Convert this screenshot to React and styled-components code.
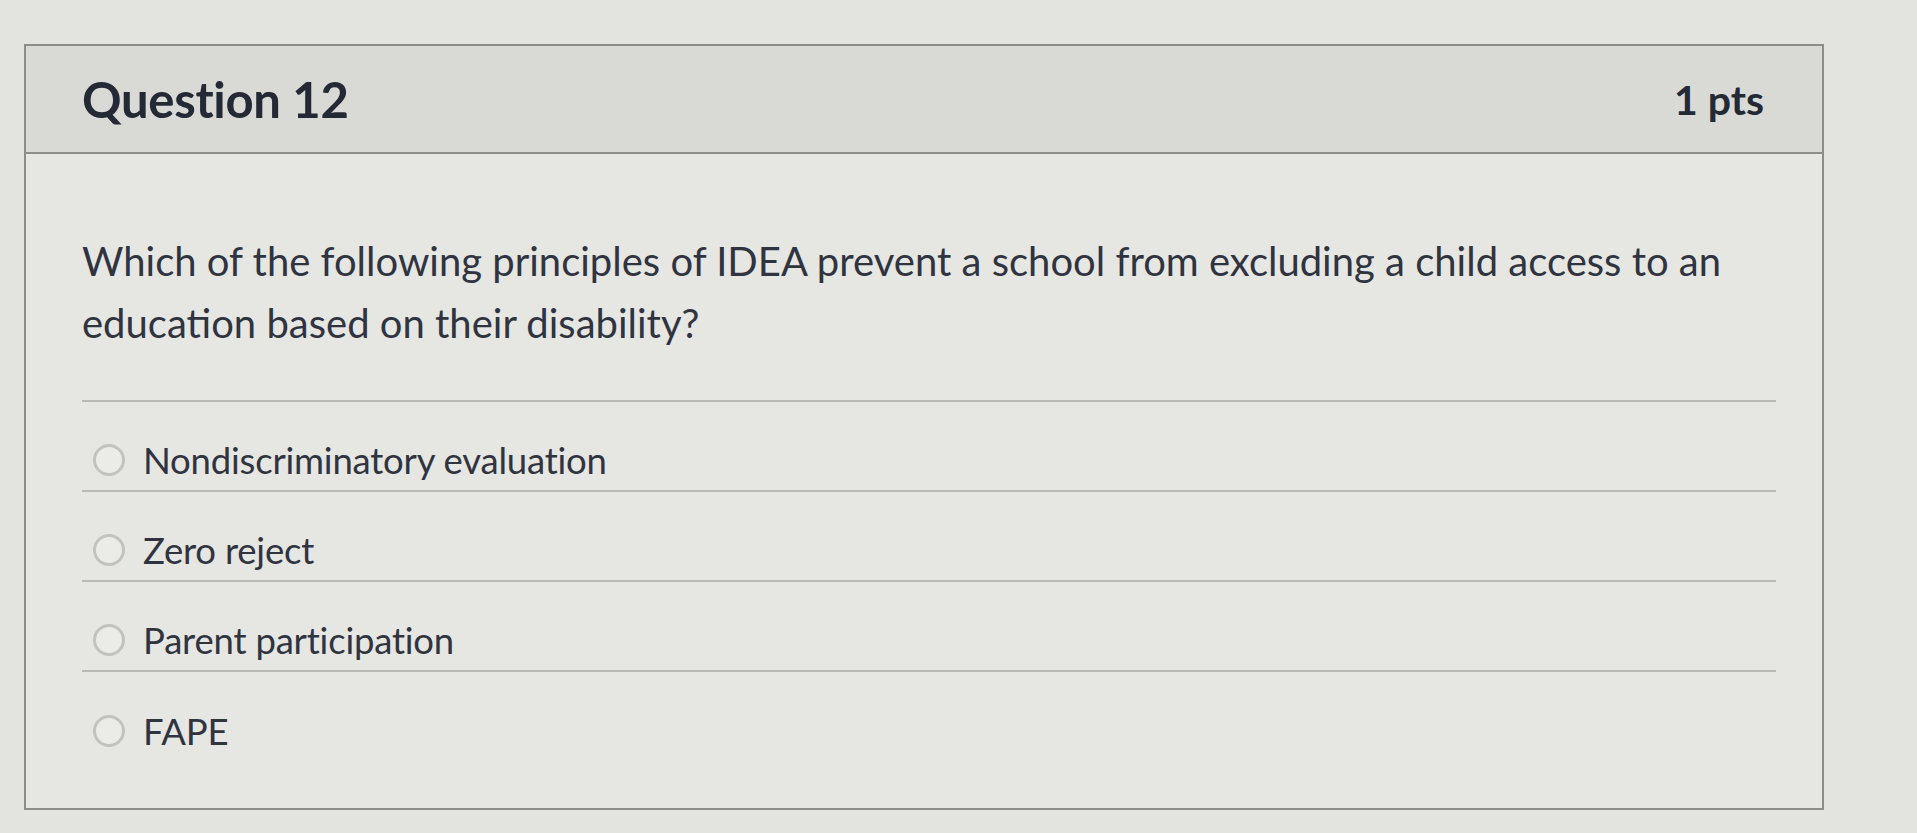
import React from "react";
import styled, { createGlobalStyle } from "styled-components";

const Global = createGlobalStyle`
  html, body { margin: 0; padding: 0; }
  body {
    background: #e3e3df;
    font-family: Lato, "Open Sans", "Liberation Sans", sans-serif;
    color: #2b303a;
  }
`;

const Page = styled.div`
  padding: 44px 0 0 24px;
  width: 1917px;
  height: 833px;
  box-sizing: border-box;
  overflow: hidden;
`;

const Card = styled.section`
  width: 1800px;
  border: 2px solid #8c8c89;
  background: #e6e6e2;
  box-sizing: border-box;
`;

const Header = styled.header`
  height: 108px;
  display: flex;
  align-items: center;
  justify-content: space-between;
  padding: 0 58px 0 56px;
  background: #d9d9d5;
  border-bottom: 2px solid #8e8e8b;
  box-sizing: border-box;
`;

const Title = styled.h2`
  margin: 0;
  font-size: 49px;
  font-weight: 700;
  letter-spacing: -0.3px;
  color: #242a35;
`;

const Points = styled.span`
  font-size: 41px;
  font-weight: 700;
  color: #242a35;
`;

const Body = styled.div`
  padding: 76px 46px 46px 56px;
`;

const QuestionText = styled.p`
  margin: 0 0 46px;
  font-size: 40px;
  line-height: 62px;
  color: #2f3440;
`;

const Answers = styled.div`
  border-top: 2px solid #b9b9b5;
`;

const Answer = styled.label`
  display: flex;
  align-items: center;
  height: 90px;
  padding: 28px 0 0 11px;
  box-sizing: border-box;
  border-bottom: ${(p) => (p.$last ? "none" : "2px solid #b9b9b5")};
`;

const Radio = styled.span`
  width: 26px;
  height: 26px;
  border-radius: 50%;
  border: 3px solid #c2c2be;
  background: #ebebe7;
  flex: none;
  margin-right: 18px;
`;

const AnswerText = styled.span`
  font-size: 36.5px;
  color: #2f3440;
  letter-spacing: -0.2px;
`;

const answers = [
  "Nondiscriminatory evaluation",
  "Zero reject",
  "Parent participation",
  "FAPE",
];

export default function App() {
  return (
    <>
      <Global />
      <Page>
        <Card>
          <Header>
            <Title>Question 12</Title>
            <Points>1 pts</Points>
          </Header>
          <Body>
            <QuestionText>
              Which of the following principles of IDEA prevent a school from
              excluding a child access to an education based on their
              disability?
            </QuestionText>
            <Answers>
              {answers.map((a, i) => (
                <Answer key={a} $last={i === answers.length - 1}>
                  <Radio />
                  <AnswerText>{a}</AnswerText>
                </Answer>
              ))}
            </Answers>
          </Body>
        </Card>
      </Page>
    </>
  );
}
